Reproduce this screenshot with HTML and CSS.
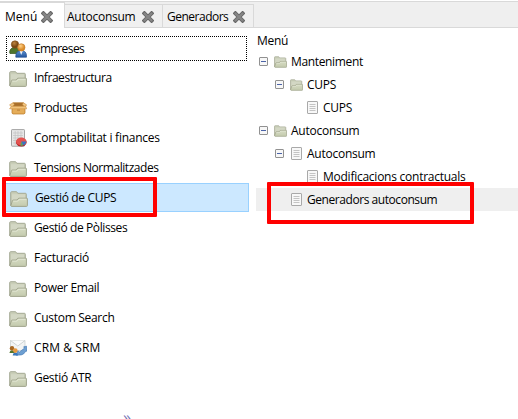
FILE: index.html
```html
<!DOCTYPE html>
<html lang="ca">
<head>
<meta charset="utf-8">
<title>Menú</title>
<link rel="stylesheet" href="styles.css">
</head>
<body>
<svg class="defs" aria-hidden="true">
  <defs>
    <linearGradient id="paper" x1="0" y1="0" x2="0" y2="1"><stop offset="0" stop-color="#d6dbc3"/><stop offset="1" stop-color="#c3caad"/></linearGradient>
    <linearGradient id="blue" x1="0" y1="0" x2="0" y2="1"><stop offset="0" stop-color="#5d91cf"/><stop offset="1" stop-color="#2456a0"/></linearGradient>
    <radialGradient id="gold" cx=".4" cy=".3"><stop offset="0" stop-color="#ffd28a"/><stop offset="1" stop-color="#dc8d2b"/></radialGradient>
    <radialGradient id="brown" cx=".4" cy=".3"><stop offset="0" stop-color="#bf8640"/><stop offset="1" stop-color="#794711"/></radialGradient>
  </defs>
  <symbol id="folder" viewBox="0 0 18 16">
    <path d="M.7 14.5V1.6Q.7.7 1.6.7H6.6L7.8 2.3H15.4Q16.3 2.3 16.3 3.2V12H2Z" fill="#c9ceb8" stroke="#a6aa95"/>
    <path d="M2 3.2H15V7H8L6.5 9H3L2 12Z" fill="#d3d7c4"/>
    <path d="M.8 14.9L2.4 9.6Q2.6 9.1 3.2 9.1H7.2L8.8 7.2H17Q17.5 7.2 17.4 7.9V14.6Q17.4 15.4 16.6 15.4H1.4Z" fill="url(#paper)" stroke="#a0a48c"/>
    <path d="M3.3 10.1H7.7L9.3 8.2H16.4" fill="none" stroke="#e9ecdc" stroke-width=".8"/>
  </symbol>
  <symbol id="doc" viewBox="0 0 11 13">
    <rect x=".5" y=".5" width="10" height="12" rx=".5" fill="#f8f8f8" stroke="#a9a9a9"/>
    <path d="M2.5 3.5H8.5M2.5 5.5H8.5M2.5 7.5H8.5M2.5 9.5H8.5" stroke="#c4c4c4"/>
  </symbol>
  <symbol id="minus" viewBox="0 0 9 9">
    <rect x=".5" y=".5" width="8" height="8" rx=".5" fill="#f7f7f7" stroke="#919191"/>
    <path d="M2 4.5H7" stroke="#4b63a7"/>
  </symbol>
  <symbol id="close" viewBox="0 0 12 12">
    <path d="M2.4 2.4L9.6 9.6M9.6 2.4L2.4 9.6" stroke="#666" stroke-width="4" stroke-linecap="square"/>
    <path d="M2.5 2.5L9.5 9.5M9.5 2.5L2.5 9.5" stroke="#868686" stroke-width="2.4" stroke-linecap="round"/>
  </symbol>
</svg>

<nav class="tabs">
  <div class="tab active"><span class="t-menu">Menú</span><svg class="close"><use href="#close"/></svg></div>
  <div class="tab second"><span class="t-auto">Autoconsum</span><svg class="close"><use href="#close"/></svg></div>
  <div class="tab third"><span class="t-gen">Generadors</span><svg class="close"><use href="#close"/></svg></div>
</nav>

<main class="panes">
  <ul class="modules">
    <li class="focused">
      <svg class="icon" viewBox="0 0 18 18">
        <path d="M.6 12.5Q.8 7.5 6 7.5T11 12.5V13.5H1Z" fill="#4e742c" stroke="#34541d" stroke-width=".7"/>
        <circle cx="6" cy="4.5" r="3.7" fill="url(#brown)" stroke="#7c4c17" stroke-width=".6"/>
        <path d="M6.8 16Q6.8 10.7 12.2 10.7T17.5 16V17.2H6.8Z" fill="url(#blue)" stroke="#275294" stroke-width=".7"/>
        <path d="M10.7 11L12.2 15L13.8 11Z" fill="#f2f5fa"/>
        <circle cx="12.3" cy="7.4" r="3.7" fill="url(#gold)" stroke="#bd7625" stroke-width=".6"/>
      </svg><span class="l-emp">Empreses</span></li>
    <li><svg class="icon folder"><use href="#folder"/></svg><span class="l-inf">Infraestructura</span></li>
    <li>
      <svg class="icon" viewBox="0 0 18 18">
        <path d="M3 8H16V14.2L14.8 15H4L3 14.2Z" fill="#e5ad59" stroke="#b97924" stroke-width=".7"/>
        <path d="M4.2 3.7H14.3L16 8H3Z" fill="#a86f2b" stroke="#bb8035" stroke-width=".7"/>
        <path d="M4.2 3.7L.6 5.8L3 8.6L5.3 5.6ZM14.3 3.7L17.6 5.8L16 8.6L13.4 5.6Z" fill="#f2c886" stroke="#c88a38" stroke-width=".6"/>
        <path d="M2.5 7.2H16.5L17.8 9.8H.6Z" fill="#f1c37b" stroke="#cb9144" stroke-width=".6"/>
        <path d="M8 10.3H11V12H8Z" fill="#c89147"/>
      </svg><span class="l-pro">Productes</span></li>
    <li>
      <svg class="icon" viewBox="0 0 18 18">
        <rect x="2.5" y=".6" width="13" height="16.6" rx=".6" fill="#e7e7e7" stroke="#a4a4a4"/>
        <path d="M4 4H14M4 6.5H14M4 9H14M4 11.5H14M4 14H14M6.2 2V16M9 2V16M12 2V16" stroke="#c2c2c2" stroke-width=".7"/>
        <ellipse cx="12.3" cy="13.4" rx="5.3" ry="4.2" fill="#b82528"/>
        <ellipse cx="12.3" cy="12.4" rx="5.2" ry="3.9" fill="#e45350"/>
        <path d="M12.3 12.4H17.5Q17 15.4 14 16.4Z" fill="#3974c3"/>
        <path d="M12.3 12.4L14 16.4Q12.7 17 11.3 16.5Z" fill="#56a85b"/>
      </svg><span class="l-com">Comptabilitat i finances</span></li>
    <li><svg class="icon folder"><use href="#folder"/></svg><span class="l-ten">Tensions Normalitzades</span></li>
    <li class="selected"><svg class="icon folder"><use href="#folder"/></svg><span class="l-cup">Gestió de CUPS</span></li>
    <li><svg class="icon folder"><use href="#folder"/></svg><span class="l-pol">Gestió de Pòlisses</span></li>
    <li><svg class="icon folder"><use href="#folder"/></svg><span class="l-fac">Facturació</span></li>
    <li><svg class="icon folder"><use href="#folder"/></svg><span class="l-pow">Power Email</span></li>
    <li><svg class="icon folder"><use href="#folder"/></svg><span class="l-cus">Custom Search</span></li>
    <li>
      <svg class="icon" viewBox="0 0 18 18">
        <path d="M1.5 1.5H16V11.5H1.5Z" fill="#f2f4f4" stroke="#c4caca" stroke-width=".7"/>
        <path d="M1.5 1.5L8.8 7L16 1.5" fill="#fafbfb" stroke="#c4caca" stroke-width=".8"/>
        <path d="M17.7 7.2L14.7 7.8L15.4 9.2L10.5 13L8.8 11.7L7 16.2L12.3 15.9L14.5 15L17 12L18 12.2Z" fill="#6d9fd1" stroke="#3b72b0" stroke-width=".6"/>
        <path d="M.4 14Q.8 11.2 3 11.2T6 14Z" fill="#52752b"/>
        <circle cx="3" cy="9.3" r="2.2" fill="#a76721"/>
        <path d="M3.7 16.5Q4 13.4 6.4 13.4T9 16.5Z" fill="#3977ba"/>
        <circle cx="6.3" cy="11.6" r="2.3" fill="#e7993e"/>
      </svg><span class="l-crm">CRM &amp; SRM</span></li>
    <li><svg class="icon folder"><use href="#folder"/></svg><span class="l-atr">Gestió ATR</span></li>
  </ul>

  <section class="tree">
    <header><span class="r-menu">Menú</span></header>
    <div class="node"><svg class="minus"><use href="#minus"/></svg><svg class="small"><use href="#folder"/></svg><span class="r-man">Manteniment</span></div>
    <div class="node level1"><svg class="minus"><use href="#minus"/></svg><svg class="small"><use href="#folder"/></svg><span class="r-cup">CUPS</span></div>
    <div class="node level2 leaf"><svg class="doc"><use href="#doc"/></svg><span class="r-cup">CUPS</span></div>
    <div class="node"><svg class="minus"><use href="#minus"/></svg><svg class="small"><use href="#folder"/></svg><span class="t-auto">Autoconsum</span></div>
    <div class="node level1"><svg class="minus"><use href="#minus"/></svg><svg class="doc"><use href="#doc"/></svg><span class="t-auto">Autoconsum</span></div>
    <div class="node level2 leaf"><svg class="doc"><use href="#doc"/></svg><span class="r-mod">Modificacions contractuals</span></div>
    <div class="node level1 leaf current"><svg class="doc"><use href="#doc"/></svg><span class="r-gen">Generadors autoconsum</span></div>
  </section>
</main>
<div class="more">»</div>
<div class="mark mark-module"></div>
<div class="mark mark-node"></div>
</body>
</html>
```

FILE: styles.css
```css
* { box-sizing: border-box; }
body {
  margin: 0;
  width: 518px;
  height: 419px;
  position: relative;
  overflow: hidden;
  background: #fff;
  color: #000;
  font: 12px/16px "Open Sans", "Noto Sans", sans-serif;
  white-space: nowrap;
}
.defs { position: absolute; width: 0; height: 0; }
svg { display: block; flex: none; }
.tabs {
  display: flex;
  align-items: flex-end;
  height: 28px;
  background: linear-gradient(#fff 1px, #d9d9d9 1px, #d9d9d9 2px, #efefef 2px);
  border-bottom: 1px solid #d9d9d9;
}
.tab {
  display: flex;
  align-items: center;
  justify-content: space-between;
  height: 23px;
  border: 1px solid #d9d9d9;
  border-width: 1px 1px 0 0;
  background: #f0f0f0;
}
.tab.active {
  width: 65px;
  height: 26px;
  margin-bottom: -1px;
  padding: 2px 11px 0 5px;
  background: #fff;
}
.tab.second { width: 98px; padding: 2px 8px 0 2px; }
.tab.third { width: 91px; padding: 2px 8px 0 4px; }
.close { width: 12px; height: 12px; }
.panes { display: flex; }
.modules {
  width: 250px;
  margin: 0;
  padding: 5px 0 0 5px;
  list-style: none;
}
.modules li {
  display: flex;
  align-items: center;
  width: 244px;
  height: 30px;
  padding-left: 4px;
  gap: 7px;
}
.icon { width: 18px; height: 18px; }
.icon.folder { height: 16px; margin-top: 2px; }
.modules .focused {
  width: 241px;
  height: 25px;
  margin: 3px 0 2px 1px;
  padding-left: 2px;
  border: 1px dotted #000;
}
.modules .selected {
  height: 29px;
  margin-bottom: 1px;
  padding-top: 1px;
  background: #cce8ff;
  border: 1px solid #99d1ff;
}
.tree { flex: 1; padding: 5px 0 0 6px; }
.tree header { height: 17px; padding-left: 1px; }
.node {
  display: flex;
  align-items: center;
  height: 23px;
  padding-left: 3px;
}
.level1 { padding-left: 19px; }
.level2 { padding-left: 35px; }
.level1.leaf { padding-left: 35px; }
.level2.leaf { padding-left: 51px; }
.minus { width: 9px; height: 9px; margin-right: 6px; }
.small { width: 13px; height: 12px; margin-right: 4px; }
.doc { width: 11px; height: 13px; margin: 0 5px 0 1px; }
.leaf .doc { margin-left: 0; }
.current { background: #efefef; }

/* tracking per label */
.t-auto, .l-com, .r-mod { letter-spacing: -.25px; }
.l-fac, .l-cus, .l-atr, .r-menu, .r-cup { letter-spacing: -.3px; }
.l-pro, .l-pow, .l-cup, .r-man { letter-spacing: -.35px; }
.l-pol { letter-spacing: -.4px; }
.l-ten, .l-inf, .r-gen { letter-spacing: -.44px; }
.t-gen { letter-spacing: -.5px; }
.l-emp { letter-spacing: -.6px; }
.l-crm { letter-spacing: .1px; }

.more {
  position: absolute;
  left: 123px;
  top: 409px;
  color: #7474b4;
  font-size: 16px;
}
.mark { position: absolute; border: 4px solid #ff0000; border-radius: 1px; }
.mark-module { left: 2px; top: 177px; width: 155px; height: 40px; }
.mark-node { left: 267px; top: 182px; width: 207px; height: 42px; }
```
